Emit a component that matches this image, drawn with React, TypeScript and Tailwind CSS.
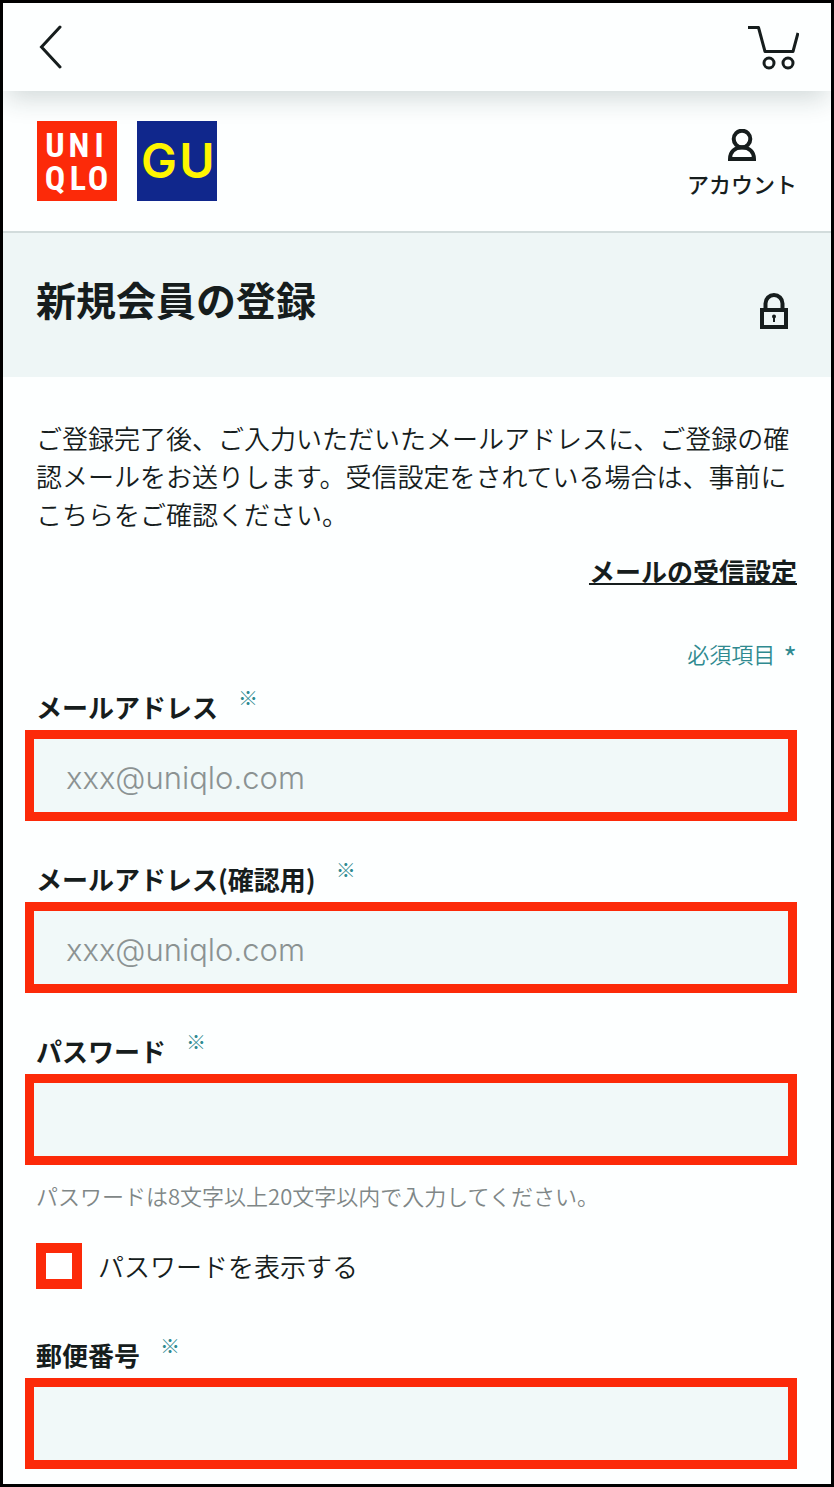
import { useState } from 'react';

type FieldProps = {
  id: string;
  label: string;
  type?: string;
  placeholder?: string;
};

function Field({ id, label, type = 'text', placeholder }: FieldProps) {
  return (
    <div>
      <label htmlFor={id} className="flex gap-5 h-[42px] text-[26px] leading-[38px] font-bold">
        {label}
        <span className="text-xl leading-5 font-[350] text-[#2f8a90]">※</span>
      </label>
      {/* The red frame sticks out past the text column on the left */}
      <div className="-ml-[11px]">
        <input
          id={id}
          type={type}
          placeholder={placeholder}
          className="block w-full h-[91px] px-8 pt-1 border-9 border-[#fc2a09] bg-[#f1f9f9] font-['Inter','Noto_Sans_CJK_JP',sans-serif] text-[31px] font-light placeholder:text-[#8b9292] outline-none"
        />
      </div>
    </div>
  );
}

function CartIcon() {
  return (
    <svg width="52" height="46" viewBox="0 0 52 46" fill="none" stroke="#161d1d" strokeWidth="3">
      <path d="M1 3.500H11.500L18 27.500H46L51 9" strokeLinejoin="round" />
      <circle cx="22" cy="39" r="5" />
      <circle cx="41" cy="39" r="5" />
    </svg>
  );
}

function AccountIcon() {
  return (
    <svg width="28" height="32" viewBox="0 0 28 32" fill="none" stroke="#161d1d" strokeWidth="4">
      <circle cx="14" cy="10" r="8.3" />
      <path d="M2 30C2 22.5 7 18.5 14 18.5S26 22.5 26 30Z" />
    </svg>
  );
}

function LockIcon() {
  return (
    <svg width="28" height="36" viewBox="0 0 28 36" fill="none" stroke="#161d1d" strokeWidth="4">
      <path d="M5.5 16V10.5a8.5 8.5 0 0 1 17 0V16" />
      <rect x="2" y="17" width="24" height="17" />
      <circle cx="14" cy="23.5" r="2" fill="#161d1d" stroke="none" />
      <path d="M14 24V29" strokeWidth="2" />
    </svg>
  );
}

export default function App() {
  const [showPassword, setShowPassword] = useState(false);

  return (
    <div className="min-h-screen border-3 border-black bg-[#fdffff] text-[#161d1d] font-['Noto_Sans_CJK_JP',sans-serif]">
      {/* Top bar */}
      <header className="relative flex items-center justify-between h-[88px] pl-[34px] pr-8 bg-[#fdffff] shadow-[0_12px_24px_-4px_rgba(20,50,50,0.18)]">
        <button type="button" aria-label="戻る">
          <svg width="26" height="44" viewBox="0 0 26 44" fill="none" stroke="#161d1d" strokeWidth="3">
            <path d="M23 2L4.500 22L23 42" strokeLinecap="round" />
          </svg>
        </button>
        <button type="button" aria-label="カート">
          <CartIcon />
        </button>
      </header>

      {/* Brand row */}
      <div className="flex justify-between py-[30px] px-[34px] border-b-2 border-[#d2dcdc]">
        <div className="flex gap-5">
          <a href="#uniqlo" aria-label="UNIQLO">
            <svg width="80" height="80" viewBox="0 0 80 80" className="font-['Liberation_Sans_Narrow','Roboto_Condensed',Roboto,sans-serif] font-bold">
              <rect width="80" height="80" fill="#fc2a09" />
              <g fill="#fff" fontSize="34" textAnchor="middle">
                <text x="18" y="36">U</text>
                <text x="42" y="36">N</text>
                <text x="62" y="36">I</text>
                <text x="18" y="69">Q</text>
                <text x="41" y="69">L</text>
                <text x="61" y="69">O</text>
              </g>
            </svg>
          </a>
          <a href="#gu" aria-label="GU">
            <svg width="80" height="80" viewBox="0 0 80 80" className="font-['Inter',sans-serif] font-semibold">
              <rect width="80" height="80" fill="#10278c" />
              <g fill="#fff500" fontSize="48" textAnchor="middle">
                <text x="22" y="57">G</text>
                <text x="60" y="57">U</text>
              </g>
            </svg>
          </a>
        </div>
        <a href="#account" className="flex flex-col items-center gap-2 pt-2 text-[22px] leading-7 font-medium">
          <AccountIcon />
          アカウント
        </a>
      </div>

      {/* Page title */}
      <div className="flex items-end justify-between h-36 pb-12 pl-[33px] pr-[43px] bg-[#eef6f6]">
        <h1 className="text-[40px] leading-[60px] font-bold">新規会員の登録</h1>
        <LockIcon />
      </div>

      <main className="pt-[42px] pb-[15px] pl-[33px] pr-[34px]">
        <p className="text-[26px] leading-[38px] font-[350]">
          ご登録完了後、ご入力いただいたメールアドレスに、ご登録の確認メールをお送りします。受信設定をされている場合は、事前にこちらをご確認ください。
        </p>
        <div className="flex justify-end mt-[19px]">
          <a href="#mail-settings" className="text-[26px] leading-[38px] font-bold underline decoration-2">
            メールの受信設定
          </a>
        </div>
        <div className="flex justify-end gap-2 h-8 mt-[47px] text-[22px] leading-8 font-[350] text-[#2f8a90]">
          <span>必須項目</span>
          <span className="pt-1 text-[30px]">*</span>
        </div>

        <form className="mt-[19px]">
          <div className="flex flex-col gap-[39px]">
            <Field id="email" label="メールアドレス" type="email" placeholder="xxx@uniqlo.com" />
            <Field id="email-confirm" label="メールアドレス(確認用)" type="email" placeholder="xxx@uniqlo.com" />
            <Field id="password" label="パスワード" type={showPassword ? 'text' : 'password'} />
          </div>
          <p className="mt-[14px] text-[22px] leading-8 font-[350] text-[#7f8787]">
            パスワードは8文字以上20文字以内で入力してください。
          </p>
          <label className="flex items-center gap-4 mt-8 mb-[47px] text-[26px] leading-[38px] font-[350]">
            <input
              type="checkbox"
              checked={showPassword}
              onChange={(e) => setShowPassword(e.target.checked)}
              className="appearance-none size-[46px] border-10 border-[#fc2a09] bg-white checked:bg-[#161d1d]"
            />
            パスワードを表示する
          </label>
          <Field id="postal-code" label="郵便番号" />
        </form>
      </main>
    </div>
  );
}
